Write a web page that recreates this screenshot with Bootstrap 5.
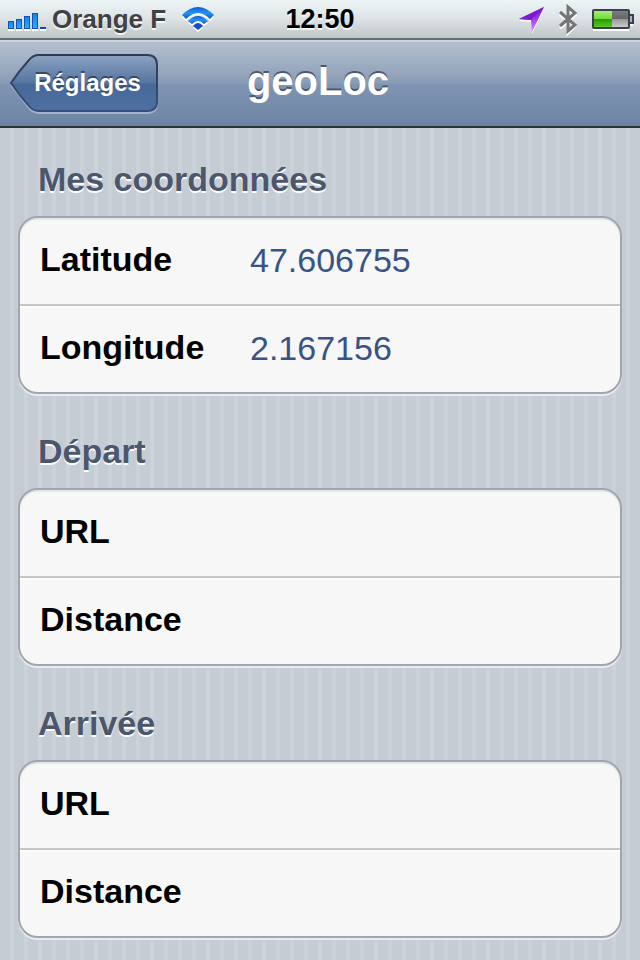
<!DOCTYPE html>
<html lang="fr">
<head>
<meta charset="utf-8">
<meta name="viewport" content="width=device-width, initial-scale=1">
<title>geoLoc</title>
<link href="https://cdn.jsdelivr.net/npm/bootstrap@5.3.0/dist/css/bootstrap.min.css" rel="stylesheet">
<style>
body {
  font-family: "Liberation Sans", Arial, sans-serif;
  min-height: 100vh;
  color: #000;
  background: repeating-linear-gradient(90deg, #c5ccd4 0, #c5ccd4 10px, #cbd2d9 10px, #cbd2d9 14px);
}
svg { display: block; overflow: visible; }
.status-bar, .title-bar { display: grid; grid-template-columns: 1fr auto 1fr; align-items: center; }
.status-bar {
  height: 40px;
  padding: 0 8px;
  background: linear-gradient(#eef5f7, #dde3e5 50%, #bfc6c8);
  border-bottom: 2px solid #656f73;
  font-size: 26px;
  line-height: 38px;
  text-shadow: 0 2px 0 rgba(255, 255, 255, .75);
}
.carrier { color: #3f4143; padding-left: 6px; }
.clock { font-size: 27px; }
.status-icons { gap: 15px; }
.title-bar {
  height: 88px;
  padding: 0 14px 2px 10px;
  background: linear-gradient(#b4c0cf, #889bb5 50%, #8095b3 50%, #6d83a3);
  border-top: 2px solid #ced7e0;
  border-bottom: 2px solid #2d3239;
}
.page-title { font-size: 40px; line-height: 48px; color: #fff; text-shadow: 0 -2px 0 #4a5870; padding-bottom: 4px; }
.back-btn { width: 148px; height: 58px; color: #fff; font-size: 24px; line-height: 28px; padding: 0 0 0 7px; text-shadow: 0 -2px 0 #34486a; }
.back-btn svg { z-index: 0; }
.back-btn span { z-index: 1; }
.section-title { font-size: 34px; line-height: 40px; padding: 31px 20px 17px; color: #4c566c; text-shadow: 0 2px 0 #fff; }
.field-group {
  border: 2px solid #a0a5ae;
  border-radius: 20px;
  background: #f7f7f7;
  box-shadow: 0 2px 0 #e9edf0, inset 0 2px 0 #e6e6e8;
  overflow: hidden;
}
.field-row { padding: 0 20px; height: 86px; font-size: 34px; line-height: 40px; }
.field-row + .field-row { height: 88px; border-top: 2px solid #c6c6c6; box-shadow: inset 0 2px 0 #fff; }
.field-row label { width: 210px; padding-bottom: 4px; }
.field-row input { min-width: 0; color: #385487; background: transparent; outline: 0; margin-bottom: 2px; }
.form-body { padding: 0 18px 22px; }
.form-section + .form-section { padding-top: 6px; }
</style>
<script src="https://cdn.jsdelivr.net/npm/bootstrap@5.3.0/dist/js/bootstrap.bundle.min.js" defer></script>
</head>
<body>
<header>
  <div class="status-bar">
    <div class="d-flex align-items-center">
      <svg width="38" height="20" viewBox="0 -3 38 20" aria-hidden="true">
        <defs><linearGradient id="sig" x2="0" y2="1"><stop stop-color="#1680ee"/><stop offset="1" stop-color="#27adff"/></linearGradient></defs>
        <path d="M0 18h6M8 18h6M16 18h6M24 18h6M32 18h6" stroke="#fff" stroke-width="2"/>
        <g fill="url(#sig)" stroke="#1550b8"><rect x=".5" y="9.500" width="5" height="7"/><rect x="8.500" y="7.500" width="5" height="9"/><rect x="16.500" y="4.500" width="5" height="12"/><rect x="24.500" y="1.500" width="5" height="15"/></g>
        <path d="M32 16h6" stroke="#1746b8" stroke-width="2"/>
      </svg>
      <span class="carrier fw-bold">Orange F</span>
      <svg class="ms-3" width="32" height="24" viewBox="0 0 32 24" aria-hidden="true">
        <defs><linearGradient id="wf" x2="0" y2="1"><stop stop-color="#1258d4"/><stop offset=".5" stop-color="#2196f8"/><stop offset="1" stop-color="#1450c4"/></linearGradient></defs>
        <g fill="#fff" transform="translate(0 2)"><path d="M0 8Q16-8 32 8L28 12Q16 0 4 12Z"/><path d="M6 14Q16 4 26 14L22 17Q16 11 10 17Z"/><path d="M11 19Q16 13 21 19L16 23Z"/></g>
        <path d="M0 8Q16-8 32 8L28 12Q16 0 4 12Z" fill="url(#wf)"/><path d="M6 14Q16 4 26 14L22 17Q16 11 10 17Z" fill="url(#wf)"/><path d="M11 19Q16 13 21 19L16 23Z" fill="#154fc4"/>
      </svg>
    </div>
    <time class="clock fw-bold">12:50</time>
    <div class="status-icons d-flex align-items-center justify-content-end">
      <svg width="24" height="24" viewBox="1 1 24 24" aria-hidden="true">
        <defs><linearGradient id="loc" x2="0" y2="1"><stop stop-color="#7417c5"/><stop offset=".4" stop-color="#9831ee"/><stop offset="1" stop-color="#d591ff"/></linearGradient></defs>
        <path d="M25 3L0 15L13 16L13 28Z" fill="#fff"/><path d="M25 1L0 13L12 14L13 26Z" fill="url(#loc)"/><path d="M25 1L0 13L12 14Z" fill="#7d1bd0"/>
      </svg>
      <svg width="18" height="32" viewBox="0 0 18 32" aria-hidden="true">
        <g fill="none" stroke-width="3"><path d="M1 11L16 23L9 30V6L16 12L1 25" stroke="#fff"/><path d="M1 9L16 22L9 28V4L16 10L1 23" stroke="#737577"/></g>
      </svg>
      <svg width="40" height="20" viewBox="0 0 40 20" aria-hidden="true">
        <defs><linearGradient id="bat" x2="0" y2="1"><stop stop-color="#a5ee73"/><stop offset=".5" stop-color="#70dc35"/><stop offset=".52" stop-color="#279b05"/><stop offset="1" stop-color="#58c920"/></linearGradient><linearGradient id="bempty" x2="0" y2="1"><stop stop-color="#808080"/><stop offset=".48" stop-color="#666"/><stop offset=".52" stop-color="#999"/><stop offset="1" stop-color="#d0d0d0"/></linearGradient></defs>
        <path d="M1 21h36M38 16h3" stroke="#fff" stroke-width="2"/><rect x="1" y="1" width="36" height="18" rx="1" fill="url(#bempty)" stroke="#38414f" stroke-width="2"/><rect x="2" y="2" width="18" height="16" fill="url(#bat)"/><path d="M38 6h3v8h-3" fill="#aeb2b6" stroke="#38414f" stroke-width="2"/>
      </svg>
    </div>
  </div>
  <nav class="title-bar" aria-label="Navigation">
    <button type="button" class="back-btn btn border-0 rounded-0 position-relative fw-bold">
      <svg class="position-absolute top-0 start-0" width="148" height="58" viewBox="0 0 148 58" aria-hidden="true">
        <defs><linearGradient id="bk" x2="0" y2="1"><stop stop-color="#8ba3c1"/><stop offset=".5" stop-color="#5574a0"/><stop offset=".52" stop-color="#476998"/><stop offset="1" stop-color="#4d70a2"/></linearGradient><linearGradient id="edge" x2="0" y2="1"><stop stop-color="#303c50"/><stop offset="1" stop-color="#354f7b"/></linearGradient></defs>
        <path d="M1 31L19 54Q23 59 29 59H137Q147 59 147 49" fill="none" stroke="#a4b3c9" stroke-width="2"/>
        <path d="M1 29Q9 17 19 6Q23 1 29 1H137Q147 1 147 11V47Q147 57 137 57H29Q23 57 19 52Q9 41 1 29Z" fill="url(#bk)" stroke="url(#edge)" stroke-width="2"/>
      </svg>
      <span class="position-relative">Réglages</span>
    </button>
    <h1 class="page-title fw-bold m-0">geoLoc</h1>
  </nav>
</header>
<main class="form-body">
  <section class="form-section">
    <h2 class="section-title fw-bold m-0">Mes coordonnées</h2>
    <div class="field-group">
      <div class="field-row d-flex align-items-center"><label class="fw-bold flex-shrink-0" for="lat">Latitude</label><input class="flex-grow-1 border-0 p-0" id="lat" type="text" value="47.606755"></div>
      <div class="field-row d-flex align-items-center"><label class="fw-bold flex-shrink-0" for="lon">Longitude</label><input class="flex-grow-1 border-0 p-0" id="lon" type="text" value="2.167156"></div>
    </div>
  </section>
  <section class="form-section">
    <h2 class="section-title fw-bold m-0">Départ</h2>
    <div class="field-group">
      <div class="field-row d-flex align-items-center"><label class="fw-bold flex-shrink-0" for="start-url">URL</label><input class="flex-grow-1 border-0 p-0" id="start-url" type="url"></div>
      <div class="field-row d-flex align-items-center"><label class="fw-bold flex-shrink-0" for="start-dist">Distance</label><input class="flex-grow-1 border-0 p-0" id="start-dist" type="text"></div>
    </div>
  </section>
  <section class="form-section">
    <h2 class="section-title fw-bold m-0">Arrivée</h2>
    <div class="field-group">
      <div class="field-row d-flex align-items-center"><label class="fw-bold flex-shrink-0" for="end-url">URL</label><input class="flex-grow-1 border-0 p-0" id="end-url" type="url"></div>
      <div class="field-row d-flex align-items-center"><label class="fw-bold flex-shrink-0" for="end-dist">Distance</label><input class="flex-grow-1 border-0 p-0" id="end-dist" type="text"></div>
    </div>
  </section>
</main>
</body>
</html>
